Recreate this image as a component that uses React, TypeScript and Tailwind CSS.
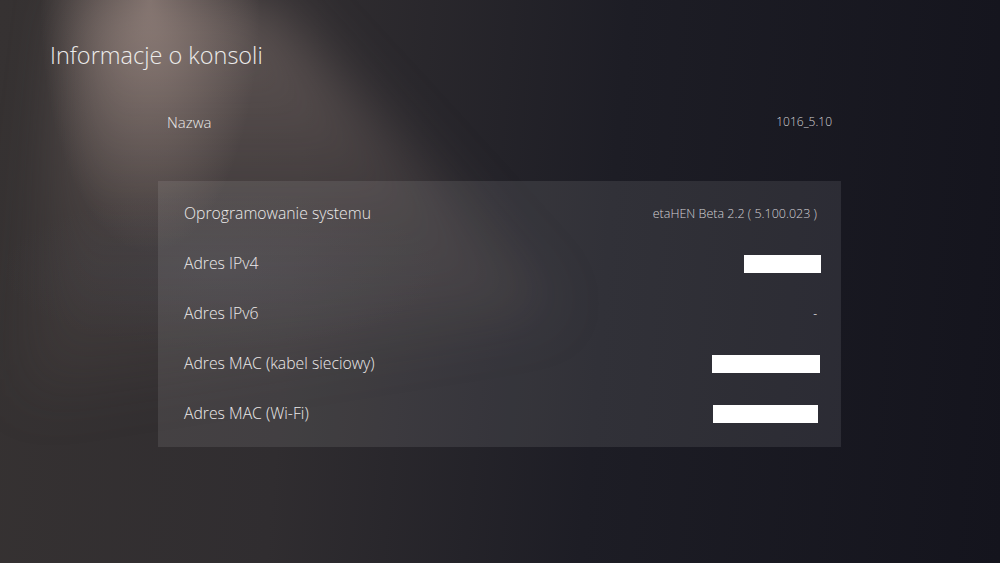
import React from "react";

const rows: { label: string; value?: string; box?: number; boxMr?: number; dash?: boolean }[] = [
  { label: "Oprogramowanie systemu", value: "etaHEN Beta 2.2 ( 5.100.023 )" },
  { label: "Adres IPv4", box: 77, boxMr: 0 },
  { label: "Adres IPv6", dash: true },
  { label: "Adres MAC (kabel sieciowy)", box: 108, boxMr: 1 },
  { label: "Adres MAC (Wi-Fi)", box: 105, boxMr: 3 },
];

export default function App() {
  return (
    <div
      className="relative w-[1000px] h-[563px] overflow-hidden text-[#e6e3e2] bg-[linear-gradient(95deg,#363232_0%,#302d30_30%,#1d1d25_60%,#14141d_100%)]"
      style={{ fontFamily: '"Open Sans", "Noto Sans", sans-serif' }}
    >
      {/* spotlight beam */}
      <div className="pointer-events-none absolute left-0 top-0 h-[563px] w-[1000px] blur-[28px]">
        <div className="absolute left-0 top-0 h-[500px] w-[700px] [clip-path:polygon(11%_0%,38%_0%,80%_62%,3%_80%)] bg-[linear-gradient(to_bottom,rgba(165,145,138,0.42),rgba(120,105,100,0.22)_45%,rgba(80,72,72,0)_100%)]" />
      </div>
      <div className="pointer-events-none absolute inset-0 bg-[radial-gradient(ellipse_11%_45%_at_15%_0%,rgba(200,175,165,0.45),transparent_100%)]" />
      <div className="pointer-events-none absolute inset-0 bg-[radial-gradient(ellipse_22%_14%_at_22%_48%,rgba(90,100,120,0.15),transparent_100%)]" />

      <div className="relative flex flex-col">
        <h1 className="pl-[50px] pt-[39px] text-[23.5px] font-light leading-[32px] text-[#ecebea]">
          Informacje o konsoli
        </h1>
        <div className="mt-[36px] flex h-[30px] items-center justify-between pl-[167px] pr-[168px]">
          <span className="text-[15px] font-light text-[#ebe9e8]">Nazwa</span>
          <span className="text-[12px] font-light text-[#d4d2d6]">1016_5.10</span>
        </div>
        <div className="ml-[158px] mt-[44px] w-[683px] bg-[rgba(255,255,255,0.09)] py-[8px] pl-[26px] pr-[20px]">
          {rows.map((r) => (
            <div key={r.label} className="flex h-[50px] items-center justify-between">
              <span className="text-[15.75px] font-light text-[#eceaea]">{r.label}</span>
              {r.value && <span className="pr-[4px] text-[12.5px] font-light text-[#d2d0d4]">{r.value}</span>}
              {r.box && <span className="h-[18px] bg-white" style={{ width: r.box, marginRight: r.boxMr }} />}
              {r.dash && <span className="pr-[4px] text-[12px] text-[#bdbcc0]">-</span>}
            </div>
          ))}
        </div>
      </div>
    </div>
  );
}
